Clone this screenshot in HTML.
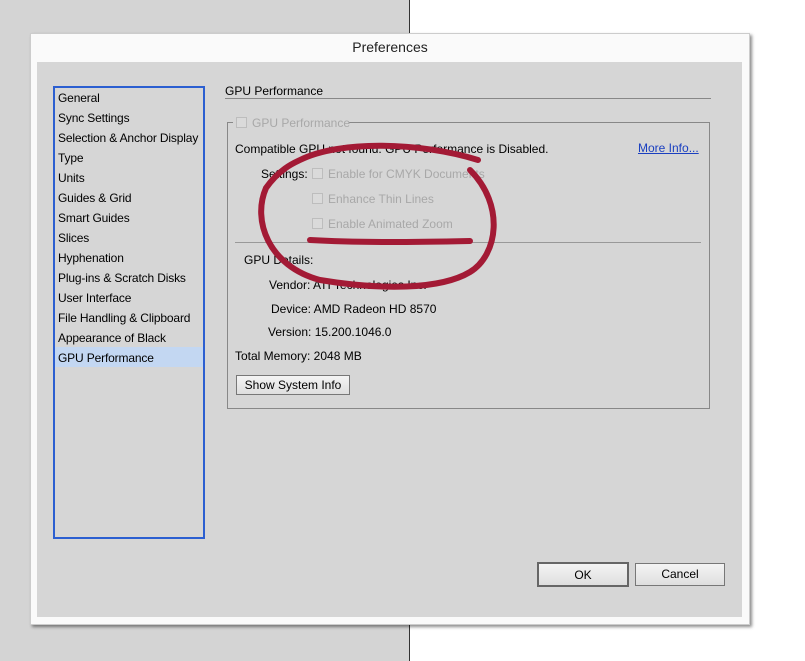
<!DOCTYPE html>
<html><head><style>
*{margin:0;padding:0;box-sizing:border-box}
body{width:805px;height:661px;position:relative;overflow:hidden;background:#fff;font-family:"Liberation Sans",sans-serif;font-size:12px;color:#000}
.a{position:absolute;white-space:nowrap}
.g{color:#a8a8a8}
.cb{position:absolute;width:11px;height:11px;border:1px solid #bdbdbd;background:#dadada}
.btn{position:absolute;background:linear-gradient(#f4f4f4,#dedede);border:1px solid #777;text-align:center}
</style></head><body>
<div class="a" style="left:0;top:0;width:410px;height:661px;background:#d4d4d4;border-right:1px solid #333"></div>
<div class="a" style="left:30px;top:33px;width:720px;height:592px;background:#fafafa;border:1px solid #ccc;box-shadow:2px 2px 3px rgba(0,0,0,.45)"></div>
<div class="a" style="left:30px;top:39px;width:720px;text-align:center;font-size:14px;color:#222">Preferences</div>
<div class="a" style="left:37px;top:62px;width:705px;height:555px;background:#d6d6d6"></div>
<div class="a" style="left:53px;top:86px;width:152px;height:453px;border:2px solid #2c5fd1"></div>
<div class="a" style="left:55px;top:347px;width:148px;height:20px;background:#c3d7f2"></div>
<div class="a" style="left:58px;top:88px;line-height:20px;letter-spacing:-0.15px">General<br>Sync Settings<br>Selection &amp; Anchor Display<br>Type<br>Units<br>Guides &amp; Grid<br>Smart Guides<br>Slices<br>Hyphenation<br>Plug-ins &amp; Scratch Disks<br>User Interface<br>File Handling &amp; Clipboard<br>Appearance of Black<br>GPU Performance</div>
<div class="a" style="left:225px;top:84px">GPU Performance</div>
<div class="a" style="left:225px;top:98px;width:486px;height:1px;background:#888"></div>
<div class="a" style="left:227px;top:122px;width:483px;height:287px;border:1px solid #888"></div>
<div class="a" style="left:233px;top:115px;width:116px;height:14px;background:#d6d6d6"></div>
<div class="cb" style="left:236px;top:117px"></div>
<div class="a g" style="left:252px;top:116px">GPU Performance</div>
<div class="a" style="left:235px;top:142px">Compatible GPU not found. GPU Performance is Disabled.</div>
<div class="a" style="left:638px;top:141px;color:#1a3fc0;text-decoration:underline">More Info...</div>
<div class="a" style="left:261px;top:167px">Settings:</div>
<div class="cb" style="left:312px;top:168px"></div><div class="a g" style="left:328px;top:167px">Enable for CMYK Documents</div>
<div class="cb" style="left:312px;top:193px"></div><div class="a g" style="left:328px;top:192px">Enhance Thin Lines</div>
<div class="cb" style="left:312px;top:218px"></div><div class="a g" style="left:328px;top:217px">Enable Animated Zoom</div>
<div class="a" style="left:235px;top:242px;width:466px;height:1px;background:#999"></div>
<div class="a" style="left:244px;top:253px">GPU Details:</div>
<div class="a" style="left:269px;top:278px">Vendor: ATI Technologies Inc.</div>
<div class="a" style="left:271px;top:302px">Device: AMD Radeon HD 8570</div>
<div class="a" style="left:268px;top:325px">Version: 15.200.1046.0</div>
<div class="a" style="left:235px;top:349px">Total Memory: 2048 MB</div>
<div class="btn" style="left:236px;top:375px;width:114px;height:20px;line-height:18px">Show System Info</div>
<div class="btn" style="left:537px;top:562px;width:92px;height:25px;line-height:22px;border:2px solid #666">OK</div>
<div class="btn" style="left:635px;top:563px;width:90px;height:23px;line-height:21px">Cancel</div>
<svg class="a" style="left:0;top:0" width="805" height="661">
<path d="M300 160 C340 140 420 142 478 160 M470 170 C505 205 498 255 470 272 C440 290 380 290 320 280 C268 266 252 220 266 188 C280 168 296 162 300 160 M310 240 C360 243 420 242 470 241" fill="none" stroke="#a31a35" stroke-width="6" stroke-linecap="round"/>
</svg>
</body></html>
